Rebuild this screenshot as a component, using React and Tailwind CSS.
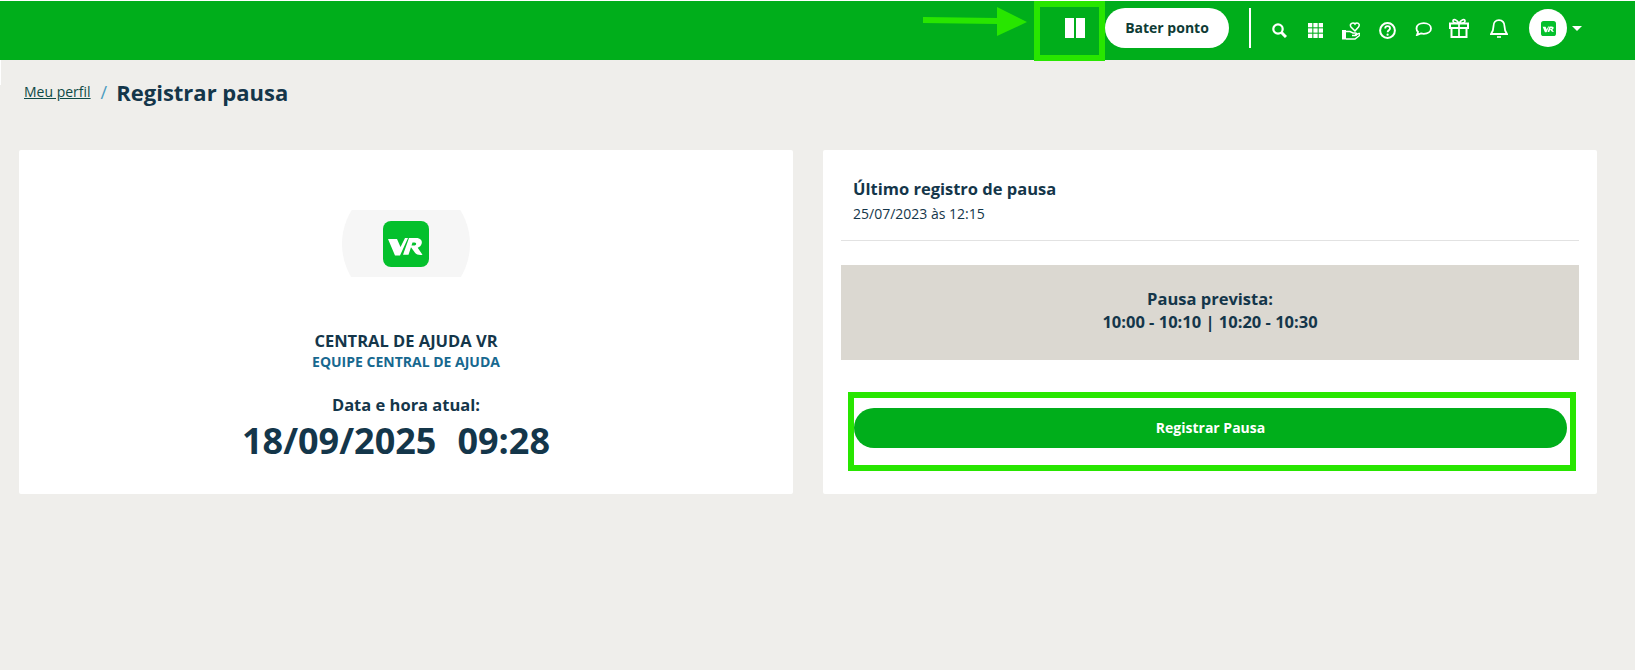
const VrLogo = ({ className }) => (
  <svg viewBox="0 0 46 46" className={className}>
    <rect width="46" height="46" rx="8" fill="#04c02c" />
    <path d="M5 18h9l3.500 8L22 17h3l-8 17.500h-5z" fill="#fff" />
    <path
      fillRule="evenodd"
      d="M26 17h7c4.500 0 6.500 2.500 5.700 5.500-.6 2.200-2 3.500-4 4.300l4.800 7c-3 .5-6 0-7.500-2l-4-5.500-2.500 7.500h-5.500zM29.500 21.500l-1 3h3c2 0 2.500-3 0-3z"
      fill="#fff"
    />
  </svg>
);

const App = () => {
  return (
    <div className="relative min-h-[670px] bg-[#efeeeb] text-[#14364a] font-['Open_Sans','Noto_Sans',sans-serif]">
      <div className="h-px bg-white" />
      {/* leftover sliver at the screen edge */}
      <div className="absolute left-0 top-[60px] w-px h-[25px] bg-white" />

      {/* Top bar */}
      <header className="h-[59px] bg-[#00ae1b] flex items-center justify-end pr-[53px]">
        <svg viewBox="0 0 104 30" className="w-[104px] h-[30px] self-start mt-[6px] mr-[7px]">
          <path d="M0 10 L74 11 L74 0 L104 15 L74 29 L74 17 L0 16z" fill="#28e600" />
        </svg>
        <div className="relative z-10 w-[71px] h-[60px] self-start border-[6px] border-[#28e600] flex items-center justify-center gap-[2px] pb-[6px] pl-[10px]">
          <span className="w-[9px] h-5 bg-white" />
          <span className="w-[9px] h-5 bg-white" />
        </div>
        <button className="w-[124px] h-10 mb-[5px] rounded-full bg-white text-sm font-bold text-[#0e3b35]">Bater ponto</button>
        <span className="ml-5 w-0.5 h-10 mb-[5px] bg-white" />

        <div className="flex items-center text-white">
          {/* search */}
          <svg viewBox="0 0 15 15" fill="none" stroke="currentColor" className="ml-[21px] w-[15px] h-[15px] -mt-px">
            <circle cx="6" cy="6" r="4.700" strokeWidth="2.200" />
            <path d="M9.500 9.500 14 14" strokeWidth="3" />
          </svg>
          {/* apps */}
          <svg viewBox="0 0 15 15" fill="currentColor" className="ml-[21px] w-[15px] h-[15px] -mt-px">
            <rect x="0" y="0" width="4.300" height="4.300" />
            <rect x="5.350" y="0" width="4.300" height="4.300" />
            <rect x="10.700" y="0" width="4.300" height="4.300" />
            <rect x="0" y="5.350" width="4.300" height="4.300" />
            <rect x="5.350" y="5.350" width="4.300" height="4.300" />
            <rect x="10.700" y="5.350" width="4.300" height="4.300" />
            <rect x="0" y="10.700" width="4.300" height="4.300" />
            <rect x="5.350" y="10.700" width="4.300" height="4.300" />
            <rect x="10.700" y="10.700" width="4.300" height="4.300" />
          </svg>
          {/* hand with heart */}
          <svg viewBox="0 0 18 18" fill="none" stroke="currentColor" strokeWidth="1.500" className="ml-[19px] w-[18px] h-[18px]">
            <path d="M13 9 9 5C7.500 3 9 1 11 1c1 0 1.700.5 2 1 .3-.5 1-1 2-1 2 0 3 2 1.500 4z" />
            <rect x="0" y="8" width="4" height="9.500" fill="currentColor" stroke="none" />
            <path d="M4 9.500h4l3 1.500h2.500c1.500 0 1.500 2.500 0 2.500H10M13 13l4-1.500c1-.3 1.500 1 .5 2L13 17H4" />
          </svg>
          {/* help */}
          <svg viewBox="0 0 17 17" fill="none" stroke="currentColor" strokeWidth="2" className="ml-[19px] w-[17px] h-[17px]">
            <circle cx="8.500" cy="8.500" r="7.400" />
            <path d="M6.200 6.500c0-1.500 1.200-2.300 2.400-2.300s2.400.9 2.400 2.200c0 1.800-2.400 2-2.400 3.800" strokeWidth="1.800" />
            <circle cx="8.600" cy="12.700" r="1.100" fill="currentColor" stroke="none" />
          </svg>
          {/* chat */}
          <svg viewBox="0 0 17 14" fill="none" stroke="currentColor" strokeWidth="1.800" className="ml-[19px] w-[17px] h-3.5 -mt-[3px]">
            <path d="M8.800 1.200c4 0 7.200 2 7.200 5.300s-3.200 5.300-7.200 5.300c-1 0-2-.1-2.900-.4L2 13l1-3C2 9 1.500 7.800 1.500 6.500c0-3.300 3.300-5.300 7.300-5.300z" />
          </svg>
          {/* gift */}
          <svg viewBox="0 0 20 20" fill="none" stroke="currentColor" strokeWidth="2" className="ml-[17px] w-5 h-5 -mt-[5px]">
            <rect x="1" y="5.500" width="18" height="4.500" />
            <rect x="2.500" y="10" width="15" height="9" />
            <path d="M10 5.500V19M10 5.500C8 1.500 4 .5 4 3c0 1.500 2 2.500 6 2.500zM10 5.500c2-4 6-5 6-2.500 0 1.500-2 2.500-6 2.500z" strokeWidth="1.700" />
          </svg>
          {/* bell */}
          <svg viewBox="0 0 18 19" fill="none" stroke="currentColor" strokeWidth="1.800" className="ml-[21px] w-[18px] h-[19px] -mt-1">
            <path d="M9 1.200c-3.500 0-5.500 2.700-5.500 6 0 4-1 5.800-2.500 7.800h16c-1.500-2-2.500-3.800-2.500-7.800 0-3.300-2-6-5.500-6z" />
            <path d="M7 18h4" strokeWidth="1.600" />
          </svg>
        </div>

        <div className="ml-[21px] w-[38px] h-[38px] mb-[5px] rounded-full bg-white flex items-center justify-center">
          <VrLogo className="w-[15px] h-[15px]" />
        </div>
        <span className="ml-[5px] mb-[4px] border-x-[5px] border-x-transparent border-t-[5px] border-t-white" />
      </header>

      {/* Breadcrumb */}
      <div className="pl-6 flex items-center h-[64px]">
        <a href="#" className="text-sm underline text-[#0e4a45]">Meu perfil</a>
        <span className="ml-[10px] text-lg text-[#4a9cc0]">/</span>
        <h1 className="ml-[9px] text-[22px] leading-8 font-bold">Registrar pausa</h1>
      </div>

      {/* Cards */}
      <div className="mt-[26px] pl-[19px] flex gap-[30px]">
        <section className="w-[774px] h-[344px] rounded-[2px] bg-white flex flex-col items-center">
          <div className="mt-[60px] w-[128px] h-[67px] overflow-hidden flex items-center justify-center">
            <div className="w-[128px] h-[128px] shrink-0 rounded-full bg-[#f6f6f6] flex items-center justify-center">
              <VrLogo className="w-[46px] h-[46px]" />
            </div>
          </div>
          <p className="mt-[52px] text-[16.5px] leading-6 font-bold">CENTRAL DE AJUDA VR</p>
          <p className="text-sm leading-[18px] font-bold text-[#17688f]">EQUIPE CENTRAL DE AJUDA</p>
          <p className="mt-[22px] text-[16.5px] leading-6 font-bold">Data e hora atual:</p>
          <p className="pr-5 text-[36px] leading-[48px] font-bold flex gap-[21px]">
            <span>18/09/2025</span>
            <span>09:28</span>
          </p>
        </section>

        <section className="w-[774px] h-[344px] rounded-[2px] bg-white px-[18px] pt-[27px]">
          <div className="h-[64px] px-3 border-b border-[#e2e2e2]">
            <p className="text-[16.5px] leading-6 font-bold">Último registro de pausa</p>
            <p className="text-sm leading-[26px]">25/07/2023 às 12:15</p>
          </div>
          <div className="mt-6 h-[95px] pb-1.5 bg-[#dbd8d1] flex flex-col items-center justify-center text-[16.5px] leading-[23px] font-bold">
            <p>Pausa prevista:</p>
            <p>10:00 - 10:10 | 10:20 - 10:30</p>
          </div>
          <div className="mt-8 ml-[7px] mr-[3px] h-[79px] border-[6px] border-[#28e600] pt-[10px] pr-[3px]">
            <button className="w-full h-10 rounded-full bg-[#00ae1b] text-white text-sm font-bold">Registrar Pausa</button>
          </div>
        </section>
      </div>
    </div>
  );
};

export default App;
